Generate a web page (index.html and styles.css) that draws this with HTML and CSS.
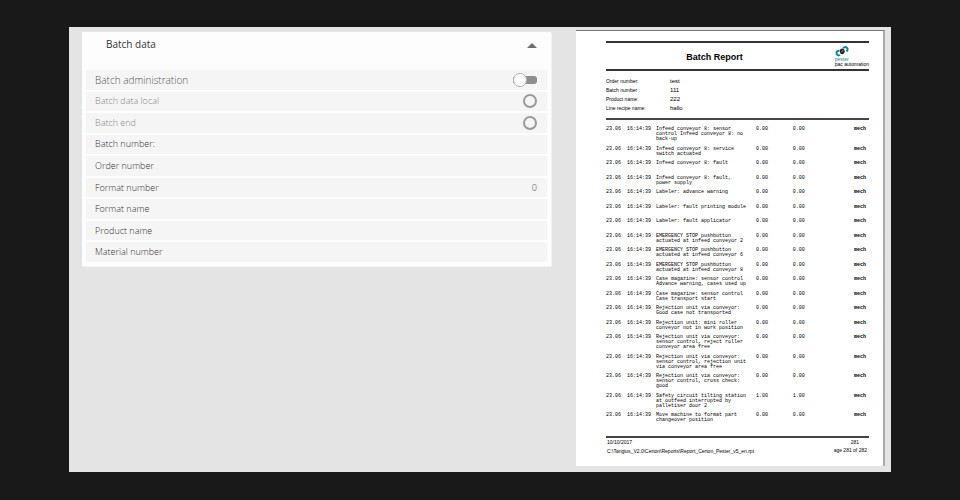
FILE: index.html
```html
<!DOCTYPE html>
<html lang="en">
<head>
    <meta charset="UTF-8">
    <meta name="viewport" content="width=device-width, initial-scale=1.0">
    <title>Batch data</title>
    <link rel="stylesheet" href="styles.css">
</head>
<body>
    <main class="stage">
        <form class="panel">
            <div class="panel-header">
                <h2>Batch data</h2>
                <button type="button" class="collapse" aria-label="Collapse">
                    <svg width="10" height="5" viewBox="0 0 10 5"><path d="M5 0 L10 5 H0 Z" fill="#6e6e6e"/></svg>
                </button>
            </div>
            <div class="rows">
                <div class="row main">
                    <label for="administration">Batch administration</label>
                    <input type="checkbox" class="switch" id="administration">
                </div>
                <div class="row disabled">
                    <label for="local">Batch data local</label>
                    <input type="radio" class="radio" id="local" name="local">
                </div>
                <div class="row disabled">
                    <label for="end">Batch end</label>
                    <input type="radio" class="radio" id="end" name="end">
                </div>
                <div class="row">
                    <label for="batchNumber">Batch number:</label>
                    <input type="text" id="batchNumber">
                </div>
                <div class="row">
                    <label for="orderNumber">Order number</label>
                    <input type="text" id="orderNumber">
                </div>
                <div class="row">
                    <label for="formatNumber">Format number</label>
                    <input type="text" id="formatNumber" value="0">
                </div>
                <div class="row">
                    <label for="formatName">Format name</label>
                    <input type="text" id="formatName">
                </div>
                <div class="row">
                    <label for="productName">Product name</label>
                    <input type="text" id="productName">
                </div>
                <div class="row">
                    <label for="materialNumber">Material number</label>
                    <input type="text" id="materialNumber">
                </div>
            </div>
        </form>

        <article class="paper">
            <header class="report-header">
                <h1>Batch Report</h1>
                <div class="logo">
                    <svg width="14" height="11" viewBox="0 0 14 11" fill="none">
                        <path d="M4.4 4.8 A2.3 2.3 0 1 0 5 9" stroke="#16878a" stroke-width="2"/>
                        <path d="M8.2 2.4 A2.3 2.3 0 1 1 11.4 5.4" stroke="#16878a" stroke-width="2"/>
                        <ellipse cx="7.2" cy="5.2" rx="2.4" ry="2.8" fill="#222"/>
                        <path d="M6.4 6.2 L8 4.2" stroke="#fff" stroke-width="0.6"/>
                    </svg>
                    <span class="brand">pester</span>
                    <span>pac automation</span>
                </div>
            </header>

            <dl class="info">
                <dt>Order number:</dt><dd>test</dd>
                <dt>Batch number :</dt><dd>111</dd>
                <dt>Product name:</dt><dd>222</dd>
                <dt>Line recipe name:</dt><dd>hallo</dd>
            </dl>

            <table class="log">
                <tbody>
                    <tr><td class="date">23.06</td><td class="time">16:14:39</td><td class="text">Infeed conveyor 8: sensor<br>control Infeed conveyor 8: no<br>back-up</td><td class="num">0.00</td><td>0.00</td><td class="unit">mech</td></tr>
                    <tr><td>23.06</td><td>16:14:39</td><td>Infeed conveyor 8: service<br>switch actuated</td><td>0.00</td><td>0.00</td><td class="unit">mech</td></tr>
                    <tr><td>23.06</td><td>16:14:39</td><td>Infeed conveyor 8: fault</td><td>0.00</td><td>0.00</td><td class="unit">mech</td></tr>
                    <tr><td>23.06</td><td>16:14:39</td><td>Infeed conveyor 8: fault,<br>power supply</td><td>0.00</td><td>0.00</td><td class="unit">mech</td></tr>
                    <tr><td>23.06</td><td>16:14:39</td><td>Labeler: advance warning</td><td>0.00</td><td>0.00</td><td class="unit">mech</td></tr>
                    <tr><td>23.06</td><td>16:14:39</td><td>Labeler: fault printing module</td><td>0.00</td><td>0.00</td><td class="unit">mech</td></tr>
                    <tr><td>23.06</td><td>16:14:39</td><td>Labeler: fault applicator</td><td>0.00</td><td>0.00</td><td class="unit">mech</td></tr>
                    <tr><td>23.06</td><td>16:14:39</td><td>EMERGENCY STOP pushbutton<br>actuated at infeed conveyor 2</td><td>0.00</td><td>0.00</td><td class="unit">mech</td></tr>
                    <tr><td>23.06</td><td>16:14:39</td><td>EMERGENCY STOP pushbutton<br>actuated at infeed conveyor 6</td><td>0.00</td><td>0.00</td><td class="unit">mech</td></tr>
                    <tr><td>23.06</td><td>16:14:39</td><td>EMERGENCY STOP pushbutton<br>actuated at infeed conveyor 8</td><td>0.00</td><td>0.00</td><td class="unit">mech</td></tr>
                    <tr><td>23.06</td><td>16:14:39</td><td>Case magazine: sensor control<br>Advance warning, cases used up</td><td>0.00</td><td>0.00</td><td class="unit">mech</td></tr>
                    <tr><td>23.06</td><td>16:14:39</td><td>Case magazine: sensor control<br>Case transport start</td><td>0.00</td><td>0.00</td><td class="unit">mech</td></tr>
                    <tr><td>23.06</td><td>16:14:39</td><td>Rejection unit via conveyor:<br>Good case not transported</td><td>0.00</td><td>0.00</td><td class="unit">mech</td></tr>
                    <tr><td>23.06</td><td>16:14:39</td><td>Rejection unit: mini roller<br>conveyor not in work position</td><td>0.00</td><td>0.00</td><td class="unit">mech</td></tr>
                    <tr><td>23.06</td><td>16:14:39</td><td>Rejection unit via conveyor:<br>sensor control, reject roller<br>conveyor area free</td><td>0.00</td><td>0.00</td><td class="unit">mech</td></tr>
                    <tr><td>23.06</td><td>16:14:39</td><td>Rejection unit via conveyor:<br>sensor control, rejection unit<br>via conveyor area free</td><td>0.00</td><td>0.00</td><td class="unit">mech</td></tr>
                    <tr><td>23.06</td><td>16:14:39</td><td>Rejection unit via conveyor:<br>sensor control, cross check:<br>good</td><td>0.00</td><td>0.00</td><td class="unit">mech</td></tr>
                    <tr><td>23.06</td><td>16:14:39</td><td>Safety circuit tilting station<br>at outfeed interrupted by<br>palletiser door 2</td><td>1.00</td><td>1.00</td><td class="unit">mech</td></tr>
                    <tr><td>23.06</td><td>16:14:39</td><td>Move machine to format part<br>changeover position</td><td>0.00</td><td>0.00</td><td class="unit">mech</td></tr>
                </tbody>
            </table>

            <footer class="report-footer">
                <div>
                    <p>10/10/2017</p>
                    <p>C:\Tangius_V2.0\Certon\Reports\Report_Certon_Pester_v5_en.rpt</p>
                </div>
                <div class="pages">
                    <p class="page">281</p>
                    <p>age 281 of 282</p>
                </div>
            </footer>
        </article>
    </main>
</body>
</html>
```
FILE: styles.css
```css
* {
    box-sizing: border-box;
}

body {
    margin: 0;
    padding: 27px 69px;
    background-color: #191919;
    font-family: "Open Sans", sans-serif;
}

h1, h2, p, dl, dd {
    margin: 0;
}

.stage {
    display: grid;
    grid-template-columns: 469fr 309fr;
    gap: 25px;
    align-items: start;
    padding: 3px 6px 6px 13px;
    background-color: #e4e4e4;
}

/* Batch data panel */
.panel {
    margin-top: 2px;
    padding: 0 4px 4px;
    background-color: #fdfdfd;
    box-shadow: 1px 1px 0 #f2f2f2;
}

.panel-header {
    display: flex;
    justify-content: space-between;
    align-items: center;
    height: 38px;
    padding: 0 10px 14px 20px;
}

.panel-header h2 {
    font-size: 10px;
    font-weight: 400;
    color: #333;
}

.collapse {
    display: flex;
    padding: 2px 0 0;
    border: 0;
    background: none;
}

.rows {
    display: grid;
    grid-auto-rows: 1fr;
    gap: 2px;
    min-height: 192px;
}

.row {
    display: flex;
    justify-content: space-between;
    align-items: center;
    padding: 0 10px 0 9px;
    background-color: #f5f5f5;
    font-size: 9px;
    font-weight: 300;
    line-height: 12px;
    color: #333;
}

.row.main {
    font-size: 10px;
    color: #555;
}

.row.disabled {
    color: #888;
}

.row input {
    margin: 0;
}

.row input[type="text"] {
    flex: 1;
    min-width: 0;
    padding: 0;
    border: 0;
    background: none;
    font: inherit;
    color: inherit;
    text-align: right;
}

.radio {
    appearance: none;
    width: 14px;
    height: 14px;
    border: 2px solid #9a9a9a;
    border-radius: 50%;
}

.switch {
    appearance: none;
    display: flex;
    align-items: center;
    width: 24px;
    height: 8px;
    border-radius: 3px;
    background-color: #8f8f8f;
}

.switch::before {
    content: "";
    width: 12px;
    height: 12px;
    flex: none;
    border: 1px solid #b0b0b0;
    border-radius: 50%;
    background-color: #fff;
}

/* Report page */
.paper {
    padding: 10px 14px 10px 30px;
    background-color: #fff;
    border-top: 1px solid #777;
    border-right: 2px solid #aaa;
    font-family: "Liberation Sans", Arial, sans-serif;
    font-size: 5px;
    line-height: 8px;
    color: #000;
}

.report-header {
    display: grid;
    grid-template-columns: 1fr auto 1fr;
    align-items: center;
    height: 30px;
    border-top: 2px solid #333;
    border-bottom: 2px solid #333;
}

.report-header h1 {
    grid-column: 2;
    padding: 2px 46px 0 0;
    font-size: 9px;
    line-height: 14px;
}

.logo {
    display: flex;
    flex-direction: column;
    justify-self: end;
    line-height: 5px;
}

.brand {
    color: #16878a;
}

.info {
    display: grid;
    grid-template-columns: 64px 1fr;
    grid-auto-rows: 9px;
    padding: 6px 0 5px;
    line-height: 9px;
    border-bottom: 2px solid #444;
}

.info dd {
    font-size: 6px;
}

.log {
    width: 100%;
    margin-top: 7px;
    border-collapse: collapse;
    table-layout: fixed;
    font-family: "Liberation Mono", "Courier New", monospace;
    font-size: 5px;
    line-height: 5px;
}

.log td {
    height: 15px;
    padding: 0 0 5px;
    vertical-align: top;
    white-space: nowrap;
}

.log tr:nth-child(even) td {
    height: 14px;
    padding-bottom: 4px;
}

.log .date {
    width: 8%;
}

.log .time {
    width: 11%;
}

.log .text {
    width: 38%;
}

.log .num {
    width: 14%;
}

.log .unit {
    padding-right: 3px;
    font-weight: 700;
    text-align: right;
}

.report-footer {
    display: flex;
    justify-content: space-between;
    margin-top: 8px;
    padding: 0 2px 0 1px;
    border-top: 2px solid #444;
    line-height: 9px;
}

.pages {
    line-height: 8px;
    text-align: right;
}

.page {
    padding-right: 8px;
}
```
